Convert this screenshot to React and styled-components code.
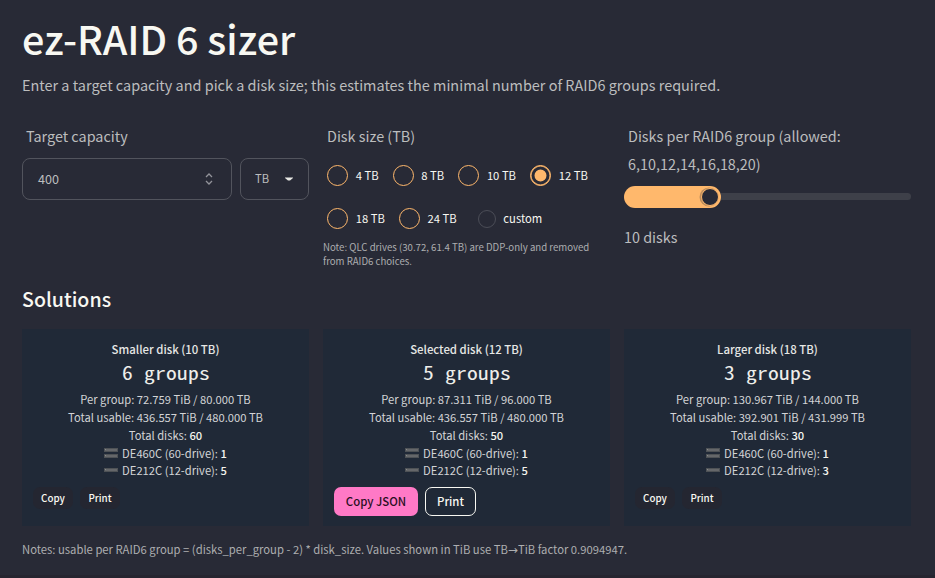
import React from "react";
import styled, { createGlobalStyle } from "styled-components";

const Global = createGlobalStyle`
  *, *::before, *::after { box-sizing: border-box; }
  body {
    margin: 0;
    background: #282a36;
    color: #f8f8f2;
    font-family: "Noto Sans CJK SC", "Noto Sans", sans-serif;
    font-size: 14px;
  }
  h1, h2, p { margin: 0; font-weight: 400; }
`;

const Page = styled.main`
  width: 935px;
  height: 578px;
  padding: 12px 24px 0 22px;
  overflow: hidden;
  border-bottom: 3px solid #262530;
`;
const Title = styled.h1`
  font-size: 39.5px;
  line-height: 52px;
  font-weight: 500;
  white-space: nowrap;
`;
const Intro = styled.p`
  margin-top: 8px;
  font-size: 14.45px;
  line-height: 26px;
  color: #bcbdbe;
  white-space: nowrap;
`;
const Columns = styled.div`
  display: grid;
  grid-template-columns: repeat(3, 287px);
  gap: 14px;
`;
const Form = styled(Columns)`
  margin-top: 24px;
  height: 163px;
`;
const Label = styled.div`
  padding-left: 4px;
  font-size: 14.4px;
  line-height: 28px;
  color: #bcbdbe;
  white-space: nowrap;
`;
const Inputs = styled.div`
  display: flex;
  gap: 8px;
  margin-top: 8px;
`;
const Box = styled.div`
  flex: none;
  display: flex;
  align-items: center;
  justify-content: space-between;
  width: ${(p) => p.$w}px;
  height: 42px;
  padding: 0 ${(p) => p.$end}px 0 ${(p) => p.$start}px;
  border: 1px solid #52545d;
  border-radius: 8px;
  font-size: ${(p) => p.$size}px;
  color: #bcbdbe;
`;
const Value = styled.span`
  padding-bottom: 2px;
`;
const Radios = styled.div`
  display: flex;
  flex-wrap: wrap;
  gap: 22px 14px;
  margin: 15px 0 0 4px;
`;
const Option = styled.div`
  display: flex;
  align-items: center;
  gap: 7.7px;
  height: 21px;
  margin-left: ${(p) => (p.$muted ? 7 : 0)}px;
  font-size: 11.25px;
  white-space: nowrap;
`;
const OptionText = styled.span`
  padding-bottom: 2px;
`;
const Dot = styled.span`
  width: ${(p) => (p.$muted ? 18 : 21)}px;
  height: ${(p) => (p.$muted ? 18 : 21)}px;
  border: ${(p) => (p.$muted ? "1px solid #4b4d57" : "1px solid #ffb86c")};
  border-radius: 50%;
  background: ${(p) => (p.$on ? "#ffb86c" : "transparent")};
  box-shadow: ${(p) => (p.$on ? "inset 0 0 0 0.5px #ffb86c, inset 0 0 0 3.5px #282a36" : "none")};
`;
const Hint = styled.div`
  margin-top: 11px;
  font-size: 9.65px;
  line-height: 14px;
  color: #adaeb0;
  white-space: nowrap;
`;
const Slider = styled.div`
  display: flex;
  align-items: center;
  height: 22px;
  margin-top: 8px;
`;
const Fill = styled.div`
  display: flex;
  justify-content: flex-end;
  width: 97px;
  height: 22px;
  padding: 2px;
  border-radius: 11px;
  background: #ffb86c;
`;
const Thumb = styled.div`
  width: 18px;
  height: 18px;
  border: 1px solid #ffb86c;
  border-radius: 50%;
  background: #282a36;
  box-shadow: -1px 0 0 0.5px #bd8d5b;
`;
const Rail = styled.div`
  flex: 1;
  height: 7px;
  margin-bottom: 1px;
  border-radius: 0 4px 4px 0;
  background: #3e4049;
`;
const Count = styled.div`
  margin-top: 17px;
  font-size: 14.4px;
  line-height: 24px;
  color: #bcbdbe;
`;
const Heading = styled.h2`
  font-size: 19.6px;
  line-height: 28px;
  font-weight: 500;
`;
const Cards = styled(Columns)`
  margin-top: 16px;
`;
const Card = styled.section`
  height: 197px;
  padding: 10px 11px 0;
  background: #202937;
`;
const CardText = styled.div`
  display: flex;
  flex-direction: column;
  align-items: center;
  font-size: 11.2px;
  line-height: 18px;
  color: #d3d4d6;
  white-space: pre;
`;
const CardTitle = styled.div`
  line-height: 20px;
  font-size: 11.4px;
  font-weight: 500;
  color: #e6e7e5;
`;
const Groups = styled.div`
  margin: 0 0 5px;
  font-family: "Noto Sans Mono CJK SC", "Liberation Mono", monospace;
  font-size: 18.6px;
  line-height: 26px;
  letter-spacing: 0.2px;
  transform: scaleX(1.16);
  color: #eeeeea;
`;
const Line = styled.div`
  display: flex;
  align-items: center;
  height: ${(p) => p.$h || 18}px;
  line-height: ${(p) => p.$h || 18}px;
  b { font-weight: 500; color: #f4f4ee; }
  svg { margin-right: 4px; }
`;
const Buttons = styled.div`
  display: flex;
  gap: 7px;
  margin-top: 9px;
`;
const buttonLooks = {
  small: "width: 40px; height: 22px; background: #242631; font-size: 9.8px; color: #f8f8f2;",
  pink: "width: 84px; height: 29px; background: #ff79c6; font-size: 11.4px; color: #2a0f1f;",
  outline: "width: 51px; height: 29px; background: none; border: 1px solid #f8f8f2; font-size: 11.4px; color: #f8f8f2;",
};
const Button = styled.button`
  border: 0;
  padding: 0 0 1px;
  border-radius: 7px;
  font-family: inherit;
  font-weight: 500;
  white-space: nowrap;
  ${(p) => buttonLooks[p.$look]}
`;
const Notes = styled.p`
  margin-top: 15px;
  font-size: 11.28px;
  line-height: 17px;
  color: #adaeb0;
  white-space: nowrap;
`;
const Arrow = styled.span`
  font-family: "DejaVu Sans", sans-serif;
  font-size: 12px;
  line-height: 1;
`;

const Shelf = ({ double }) => (
  <svg width="14" height="10" viewBox="0 0 14 10">
    {(double ? [0, 6] : [3]).map((y) => (
      <g key={y}>
        <rect x="0" y={y} width="14" height="4" fill="#4e5256" />
        <rect x="1" y={y + 1} width="12" height="2" fill="#65676a" />
        <rect x="1" y={y + 1} width="1" height="1" fill="#898b8c" />
      </g>
    ))}
  </svg>
);

const disks = ["4 TB", "8 TB", "10 TB", "12 TB", "18 TB", "24 TB"];
const cards = [
  ["Smaller disk (10 TB)", 6, "72.759 TiB / 80.000 TB", "436.557 TiB / 480.000 TB", 60, 5],
  ["Selected disk (12 TB)", 5, "87.311 TiB / 96.000 TB", "436.557 TiB / 480.000 TB", 50, 5],
  ["Larger disk (18 TB)", 3, "130.967 TiB / 144.000 TB", "392.901 TiB / 431.999 TB", 30, 3],
];

export default function App() {
  return (
    <Page>
      <Global />
      <Title>ez-RAID 6 sizer</Title>
      <Intro>Enter a target capacity and pick a disk size; this estimates the minimal number of RAID6 groups required.</Intro>
      <Form>
        <div>
          <Label>Target capacity</Label>
          <Inputs>
            <Box $w={210} $start={15} $end={18} $size={12.6}>
              <Value>400</Value>
              <svg width="8" height="12" viewBox="0 0 8 12" fill="none" stroke="#92939a" strokeWidth="1.3">
                <path d="M1 4 L4 1 L7 4 M1 8 L4 11 L7 8" />
              </svg>
            </Box>
            <Box $w={69} $start={14} $end={15} $size={11.2}>
              <Value>TB</Value>
              <svg width="8" height="4" viewBox="0 0 8 4"><path d="M0 0.5H8V1L5 3.5H3L0 1Z" fill="#e8e8e4" /></svg>
            </Box>
          </Inputs>
        </div>
        <div>
          <Label>Disk size (TB)</Label>
          <Radios>
            {disks.map((d) => (
              <Option key={d}><Dot $on={d === "12 TB"} /><OptionText>{d}</OptionText></Option>
            ))}
            <Option $muted><Dot $muted /><OptionText>custom</OptionText></Option>
          </Radios>
          <Hint>Note: QLC drives (30.72, 61.4 TB) are DDP-only and removed<br />from RAID6 choices.</Hint>
        </div>
        <div>
          <Label>Disks per RAID6 group (allowed:<br />6,10,12,14,16,18,20)</Label>
          <Slider><Fill><Thumb /></Fill><Rail /></Slider>
          <Count>10 disks</Count>
        </div>
      </Form>
      <Heading>Solutions</Heading>
      <Cards>
        {cards.map(([title, groups, per, total, count, small], i) => (
          <Card key={title}>
            <CardText>
              <CardTitle>{title}</CardTitle>
              <Groups>{groups} groups</Groups>
              <Line>Per group: {per}</Line>
              <Line>Total usable: {total}</Line>
              <Line>Total disks: <b>{count}</b></Line>
              <Line><Shelf double />DE460C (60-drive): <b>1</b></Line>
              <Line $h={16}><Shelf />DE212C (12-drive): <b>{small}</b></Line>
            </CardText>
            <Buttons>
              <Button $look={i === 1 ? "pink" : "small"}>{i === 1 ? "Copy JSON" : "Copy"}</Button>
              <Button $look={i === 1 ? "outline" : "small"}>Print</Button>
            </Buttons>
          </Card>
        ))}
      </Cards>
      <Notes>Notes: usable per RAID6 group = (disks_per_group - 2) * disk_size. Values shown in TiB use TB<Arrow>→</Arrow>TiB factor 0.9094947.</Notes>
    </Page>
  );
}
